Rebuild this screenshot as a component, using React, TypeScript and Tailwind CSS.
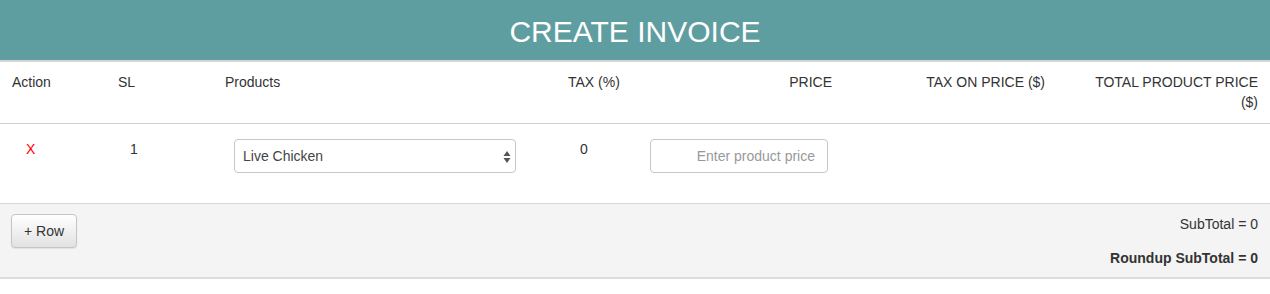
import { useState } from "react";

const font = { fontFamily: '"Liberation Sans", Arial, sans-serif' };

function SelectArrows() {
  return (
    <svg width="8" height="14" viewBox="0 0 8 14" className="absolute right-[4px] top-[10px]">
      <path d="M4 1 L7.5 6 L0.5 6 Z" fill="#555" />
      <path d="M4 13 L7.5 8 L0.5 8 Z" fill="#555" />
    </svg>
  );
}

export default function App() {
  const [price, setPrice] = useState("");

  return (
    <div className="w-[1270px] h-[294px] bg-white text-[14px] leading-[20px] text-[#333]" style={font}>
      <div className="h-[62px] bg-[#5f9ea0] border-b-2 border-[#d4d4d4] flex items-center justify-center">
        <h1 className="text-[30px] leading-none text-white pt-[4px]">CREATE INVOICE</h1>
      </div>

      <table className="w-full table-fixed">
        <colgroup>
          <col className="w-[110px]" />
          <col className="w-[107px]" />
          <col className="w-[323px]" />
          <col className="w-[100px]" />
          <col className="w-[200px]" />
          <col className="w-[213px]" />
          <col />
        </colgroup>
        <thead>
          <tr className="border-b border-[#d0d0d0] h-[61px] align-top">
            <th className="font-normal text-left pl-[12px] pt-[10px]">Action</th>
            <th className="font-normal text-left pl-[8px] pt-[10px]">SL</th>
            <th className="font-normal text-left pl-[8px] pt-[10px]">Products</th>
            <th className="font-normal text-left pl-[28px] pt-[10px] whitespace-nowrap">TAX (%)</th>
            <th className="font-normal text-right pr-[8px] pt-[10px]">PRICE</th>
            <th className="font-normal text-right pr-[8px] pt-[10px]">TAX ON PRICE ($)</th>
            <th className="font-normal text-right pr-[12px] pt-[10px]">
              <div className="ml-auto w-[170px]">TOTAL PRODUCT PRICE ($)</div>
            </th>
          </tr>
        </thead>
        <tbody>
          <tr className="border-b border-[#d8d8d8] h-[80px] align-top">
            <td className="pl-[26px] pt-[15px] text-[#ff0000]">X</td>
            <td className="pl-[20px] pt-[15px]">1</td>
            <td className="pl-[17px] pt-[15px]">
              <div className="relative w-[282px] h-[34px] border border-[#c8c8c8] rounded-[4px] bg-white">
                <span className="block pl-[8px] pt-[6px] text-[#444]">Live Chicken</span>
                <SelectArrows />
              </div>
            </td>
            <td className="pl-[40px] pt-[15px]">0</td>
            <td className="pl-[10px] pt-[15px]">
              <input
                value={price}
                onChange={(e) => setPrice(e.target.value)}
                placeholder="Enter product price"
                className="w-[178px] h-[34px] border border-[#c8c8c8] rounded-[4px] px-[12px] text-right placeholder:text-[#999] outline-none"
              />
            </td>
            <td />
            <td />
          </tr>
        </tbody>
      </table>

      <div className="bg-[#f4f4f4] border-b-2 border-[#dcdcdc] h-[75px] flex justify-between pl-[11px] pr-[12px]">
        <div className="pt-[10px]">
          <button className="w-[66px] h-[34px] border border-[#c4c4c4] rounded-[4px] bg-gradient-to-b from-white to-[#e2e2e2] text-[#333] shadow-[0_1px_1px_rgba(0,0,0,0.08)]">
            + Row
          </button>
        </div>
        <div className="flex flex-col items-end pt-[10px] gap-[14px]">
          <span>SubTotal = 0</span>
          <span className="font-bold">Roundup SubTotal = 0</span>
        </div>
      </div>
    </div>
  );
}
